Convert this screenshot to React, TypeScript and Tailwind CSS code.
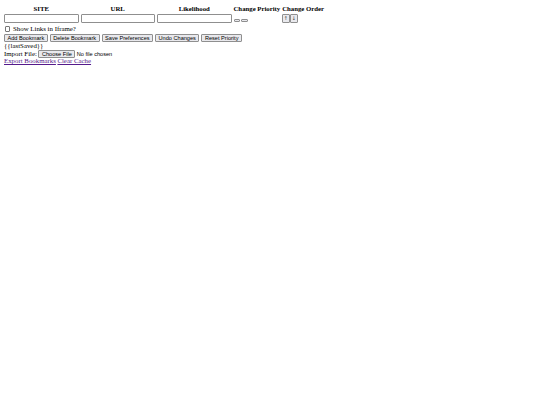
const inputCls = "block w-[74.5px] h-[9px] border border-[#8f8f8f] rounded-[1px] bg-white";
const btnCls =
  "h-[8px] px-[2.5px] border border-[#8f8f8f] bg-[#e9e9ed] rounded-[1px] font-['Liberation_Sans',sans-serif] text-[5.6px] leading-[6px] text-black";
const thCls = "p-0 font-bold text-[6.75px]";
const arrowCls =
  "w-[7.5px] h-[9px] p-0 flex items-center justify-center border border-[#8f8f8f] bg-[#e9e9ed] rounded-[1px] text-[5px] leading-none font-['DejaVu_Sans',sans-serif] text-[#333]";

const App = () => {
  return (
    <div className="pt-[3.5px] px-[4px] font-['Liberation_Serif',serif] text-[6.85px] leading-[8px] text-black bg-white min-h-[405px]">
      <table className="border-separate border-spacing-x-[2px] border-spacing-y-[1px] -mx-[2px]">
        <thead>
          <tr>
            <th className={thCls}>SITE</th>
            <th className={thCls}>URL</th>
            <th className={thCls}>Likelihood</th>
            <th className={thCls}>Change Priority</th>
            <th className={thCls}>Change Order</th>
          </tr>
        </thead>
        <tbody>
          <tr>
            <td className="p-0">
              <input className={inputCls} />
            </td>
            <td className="p-0">
              <input className={inputCls} />
            </td>
            <td className="p-0">
              <input className={inputCls} />
            </td>
            <td className="p-0 align-bottom">
              <div className="flex gap-[1px] pb-[1px]">
                <button className="w-[6.5px] h-[2.5px] border border-[#8f8f8f] bg-[#e9e9ed] rounded-[1px]" />
                <button className="w-[6.5px] h-[2.5px] border border-[#8f8f8f] bg-[#e9e9ed] rounded-[1px]" />
              </div>
            </td>
            <td className="p-0">
              <div className="flex gap-[0.5px]">
                <button className={arrowCls}>↑</button>
                <button className={arrowCls}>↓</button>
              </div>
            </td>
          </tr>
        </tbody>
      </table>
      <label className="flex items-center gap-[3px] mt-[1.5px] h-[8px]">
        <span className="w-[5.5px] h-[5.5px] border border-[#767676] rounded-[1px] bg-white ml-[0.5px]" />
        <span>Show Links in Iframe?</span>
      </label>
      <div className="flex gap-[2px] mt-[0.5px]">
        <button className={btnCls}>Add Bookmark</button>
        <button className={btnCls}>Delete Bookmark</button>
        <button className={btnCls}>Save Preferences</button>
        <button className={btnCls}>Undo Changes</button>
        <button className={btnCls}>Reset Priority</button>
      </div>
      <div>{"{{lastSaved}}"}</div>
      <div className="flex items-center gap-[1.5px]">
        <span>Import File:</span>
        <button className={btnCls}>Choose File</button>
        <span className="font-['Liberation_Sans',sans-serif] text-[5.6px]">No file chosen</span>
      </div>
      <div className="flex gap-[1.5px] -mt-[0.5px]">
        <a href="#" className="text-[#551a8b] underline">Export Bookmarks</a>
        <a href="#" className="text-[#551a8b] underline">Clear Cache</a>
      </div>
    </div>
  );
};

export default App;
